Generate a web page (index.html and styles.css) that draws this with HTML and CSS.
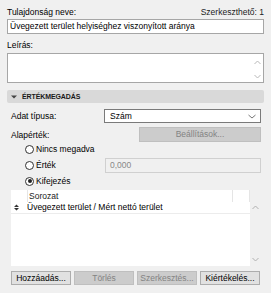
FILE: index.html
```html
<!DOCTYPE html>
<html lang="hu">
<head>
<meta charset="utf-8">
<link rel="stylesheet" href="styles.css">
</head>
<body>
<div class="panel">
  <div class="toprow">
    <span class="label">Tulajdonság neve:</span>
    <span class="editable">Szerkeszthető: 1</span>
  </div>
  <div class="input name">Üvegezett terület helyiséghez viszonyított aránya</div>
  <div class="label desc-label">Leírás:</div>
  <div class="textarea">
    <div class="vscroll">
      <svg width="7" height="5" viewBox="0 0 7 5"><path d="M0.5 4 L3.5 1 L6.5 4" fill="none" stroke="#b8b8b8" stroke-width="1"/></svg>
      <svg width="7" height="5" viewBox="0 0 7 5"><path d="M0.5 1 L3.5 4 L6.5 1" fill="none" stroke="#b8b8b8" stroke-width="1"/></svg>
    </div>
  </div>
  <div class="section">
    <svg width="6" height="4" viewBox="0 0 6 4"><path d="M0 0.5 H6 L3 3.5 Z" fill="#444"/></svg>
    <span>ÉRTÉKMEGADÁS</span>
  </div>
  <div class="body">
    <div class="row type-row">
      <span class="label">Adat típusa:</span>
      <div class="select">
        <span>Szám</span>
        <svg width="8" height="5" viewBox="0 0 8 5"><path d="M0.5 1 L4 4 L7.5 1" fill="none" stroke="#777" stroke-width="1"/></svg>
      </div>
    </div>
    <div class="row settings-row">
      <div class="btn disabled settings">Beállítások...</div>
    </div>
    <div class="label default-label">Alapérték:</div>
    <div class="radios">
      <div class="radio-row"><span class="radio"></span><span class="label">Nincs megadva</span></div>
      <div class="radio-row value-row"><span class="radio"></span><span class="label">Érték</span><div class="input value">0,000</div></div>
      <div class="radio-row"><span class="radio checked"></span><span class="label">Kifejezés</span></div>
    </div>
    <div class="table-wrap">
      <div class="table">
        <div class="thead">
          <div class="col-a"></div>
          <div class="col-b">Sorozat</div>
          <div class="col-c"></div>
        </div>
        <div class="trow">
          <div class="col-a"><svg width="5" height="7" viewBox="0 0 5 7"><path d="M0 3 L2.5 0.5 L5 3 Z M0 4 L2.5 6.5 L5 4 Z" fill="#333"/></svg></div>
          <div class="col-b">Üvegezett terület / Mért nettó terület</div>
        </div>
      </div>
      <div class="tscroll">
        <svg width="7" height="5" viewBox="0 0 7 5"><path d="M0.5 4 L3.5 1 L6.5 4" fill="none" stroke="#b0b0b0" stroke-width="1"/></svg>
        <svg width="7" height="5" viewBox="0 0 7 5"><path d="M0.5 1 L3.5 4 L6.5 1" fill="none" stroke="#b0b0b0" stroke-width="1"/></svg>
      </div>
    </div>
    <div class="buttons">
      <div class="btn">Hozzáadás...</div>
      <div class="btn disabled">Törlés</div>
      <div class="btn disabled">Szerkesztés...</div>
      <div class="btn">Kiértékelés...</div>
    </div>
  </div>
</div>
</body>
</html>
```
FILE: styles.css
```css
html, body {
  margin: 0;
  padding: 0;
  background: #f0f0f0;
}
body {
  font-family: "Liberation Sans", "DejaVu Sans", sans-serif;
  font-size: 8.5px;
  color: #000;
}
.panel {
  width: 257px;
  padding: 6px 7px 0 7px;
}
.toprow {
  display: flex;
  justify-content: space-between;
  height: 12px;
  line-height: 12px;
}
.editable {
  color: #222;
}
.input {
  box-sizing: border-box;
  background: #fff;
  border: 1px solid #a6a6a6;
  height: 15px;
  line-height: 13px;
  padding-left: 2px;
  white-space: nowrap;
  overflow: hidden;
}
.name {
  margin-top: 1px;
}
.desc-label {
  height: 12px;
  line-height: 12px;
  margin-top: 5px;
}
.textarea {
  box-sizing: border-box;
  margin-top: 2px;
  height: 30px;
  background: #fff;
  border: 1px solid #a6a6a6;
  display: flex;
  justify-content: flex-end;
}
.vscroll {
  width: 12px;
  display: flex;
  flex-direction: column;
  justify-content: space-between;
  align-items: center;
  padding: 6px 0 3px 0;
}
.vscroll svg { display: block; }
.section {
  margin-top: 7px;
  height: 13px;
  background: #d9d9d9;
  border-radius: 2px;
  display: flex;
  align-items: center;
  gap: 5px;
  padding-left: 4px;
  font-weight: bold;
  font-size: 7px;
  letter-spacing: -0.1px;
  color: #1a1a1a;
}
.section svg { display: block; }
.body {
  padding: 0 3px 0 4px;
}
.row {
  display: flex;
  align-items: center;
}
.type-row {
  margin-top: 6px;
  justify-content: space-between;
}
.select {
  box-sizing: border-box;
  width: 157px;
  height: 14px;
  background: #fff;
  border: 1px solid #7a7a7a;
  display: flex;
  align-items: center;
  justify-content: space-between;
  padding: 0 4px 0 5px;
}
.select svg { display: block; }
.settings-row {
  margin-top: 4px;
  justify-content: flex-end;
}
.btn {
  box-sizing: border-box;
  height: 15px;
  line-height: 13px;
  text-align: center;
  background: #e1e1e1;
  border: 1px solid #adadad;
  color: #000;
  white-space: nowrap;
}
.btn.disabled {
  background: #cccccc;
  border-color: #bfbfbf;
  color: #838383;
}
.settings {
  width: 122px;
}
.default-label {
  margin-top: -13px;
  height: 12px;
  line-height: 12px;
}
.radios {
  padding-left: 14px;
}
.radio-row {
  display: flex;
  align-items: center;
  gap: 2px;
  height: 16px;
}
.radio {
  box-sizing: border-box;
  width: 9px;
  height: 9px;
  border-radius: 50%;
  border: 1px solid #333;
  background: #fff;
  position: relative;
}
.radio.checked::after {
  content: "";
  position: absolute;
  left: 1.5px;
  top: 1.5px;
  width: 4px;
  height: 4px;
  border-radius: 50%;
  background: #222;
}
.value-row .input.value {
  margin-left: auto;
  width: 156px;
  height: 15px;
  background: #f0f0f0;
  border-color: #d0d0d0;
  color: #888;
  padding-left: 4px;
}
.table-wrap {
  margin-top: 1px;
  display: flex;
  height: 76px;
}
.table {
  width: 239px;
  background: #fff;
}
.thead {
  display: flex;
  height: 12px;
  line-height: 12px;
}
.thead .col-a, .thead .col-b {
  border-right: 1px solid #e5e5e5;
}
.thead .col-c {
  width: 16px;
  border-right: 1px solid #e5e5e5;
}
.col-a {
  width: 16px;
  flex: none;
  display: flex;
  align-items: center;
  justify-content: center;
}
.col-b {
  flex: 1;
  padding-left: 1px;
}
.thead .col-b {
  color: #222;
}
.trow {
  display: flex;
  height: 11px;
  line-height: 11px;
  border-bottom: 1px solid #ececec;
}
.trow .col-a {
  justify-content: flex-start;
  padding-left: 3px;
  box-sizing: border-box;
}
.trow .col-b {
  padding-left: 0;
}
.tscroll {
  width: 11px;
  display: flex;
  flex-direction: column;
  justify-content: space-between;
  align-items: center;
  padding: 15px 0 4px 0;
}
.tscroll svg { display: block; }
.buttons {
  margin-top: 5px;
  display: flex;
  gap: 3px;
}
.buttons .btn {
  width: 60px;
  height: 14px;
  line-height: 12px;
}
```
